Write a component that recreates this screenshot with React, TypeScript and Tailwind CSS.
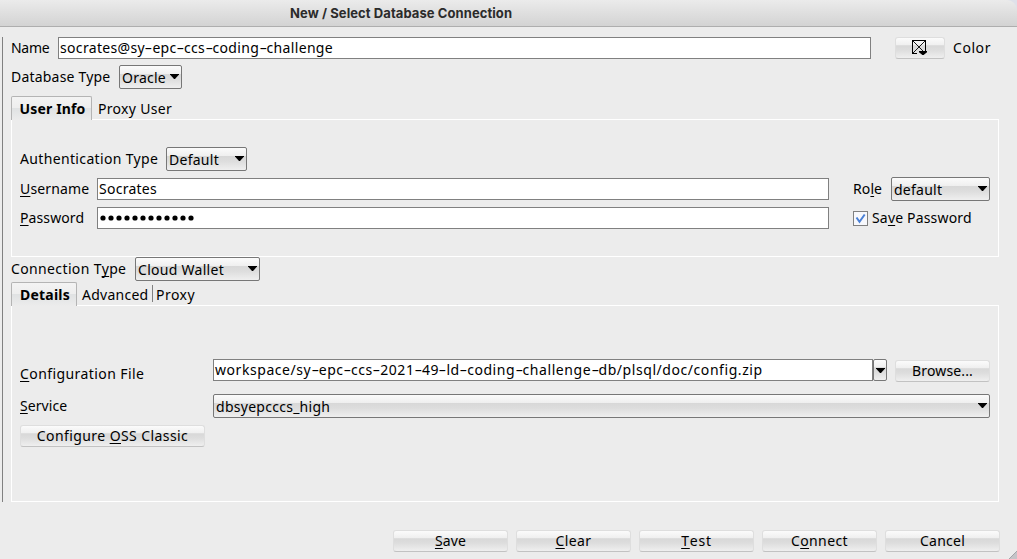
import type { ReactNode } from 'react';
import clsx from 'clsx';

const GLOSS = 'bg-[linear-gradient(#fbfbfb_0%,#efefef_36%,#d8d8d8_38%,#dddddd_60%,#efefef_100%)]';

function Caret({ className }: { className?: string }) {
  return (
    <svg width="9" height="5" viewBox="0 0 9 5" className={clsx('shrink-0', className)}>
      <path d="M0 0h9v.6L5 5H4L0 .6z" fill="#000" />
    </svg>
  );
}

function Key({ children }: { children: ReactNode }) {
  return (
    <u className="decoration-1 underline-offset-[2px] [text-decoration-skip-ink:none]">{children}</u>
  );
}

function Hyphenated({ text }: { text: string }) {
  return (
    <>
      {text.split(/(-)/).map((part, i) =>
        part === '-' ? (
          <span key={i} className="inline-block w-[7.4px] text-center tracking-normal">
            <span className="inline-block scale-x-[1.7]">-</span>
          </span>
        ) : (
          part
        ),
      )}
    </>
  );
}

function Field({ children, className }: { children?: ReactNode; className?: string }) {
  return (
    <div className={clsx('flex h-[22px] items-center border border-[#808080] bg-white pl-px', className)}>
      {children}
    </div>
  );
}

function Select({ children, className }: { children: ReactNode; className?: string }) {
  return (
    <button
      type="button"
      className={clsx(
        'flex h-6 items-center justify-between rounded-[2px] border border-[#777777] pr-[2px] pl-[2px]',
        GLOSS,
        className,
      )}
    >
      <span className="relative top-px">{children}</span>
      <Caret className="mb-px" />
    </button>
  );
}

function Button({ children, className }: { children: ReactNode; className?: string }) {
  return (
    <button
      type="button"
      className={clsx(
        'flex h-[22px] items-center justify-center rounded-[3px] border border-[#dedede] border-b-[#c2c2c2]',
        GLOSS,
        className,
      )}
    >
      {children}
    </button>
  );
}

function ActiveTab({ children, className }: { children: ReactNode; className?: string }) {
  return (
    <div
      className={clsx(
        'flex h-6 items-center justify-center rounded-t-[2px] border border-b-0 border-[#b4b4b4] bg-[linear-gradient(#f3f3f3_0%,#eeeeee_46%,#e0e2e3_50%,#ececec_100%)] pt-px pl-[2px] font-bold',
        className,
      )}
    >
      {children}
    </div>
  );
}

export default function App() {
  return (
    <div className="relative flex h-[559px] w-[1017px] flex-col overflow-hidden bg-[#ececec] font-['Noto_Sans',sans-serif] text-[14px] leading-5 whitespace-nowrap text-black">
      <header className="h-[27px] shrink-0 bg-[#dfe1ea]">
        <div className="h-full rounded-tr-[10px] border-b border-[#aeaeae] bg-linear-to-b from-[#ebebeb] to-[#d3d3d3] pt-[3px] pl-[290px] font-['Inter',sans-serif] text-[13px] font-bold tracking-[0.08px] text-[#2b2b2b]">
          New / Select Database Connection
        </div>
      </header>

      <main className="mt-[10px] ml-[2px] flex h-[465px] shrink-0 flex-col border-l border-[#808080] pl-2">
        <div className="flex h-[22px] items-center">
          <label className="w-[47px] tracking-[-0.3px]">Name</label>
          <Field className="w-[813px] tracking-[0.33px]">
            <span>
              <Hyphenated text="socrates@sy-epc-ccs-coding-challenge" />
            </span>
          </Field>
          <Button className="ml-6 w-[50px]">
            <svg width="16" height="16" viewBox="0 0 16 16">
              <path d="M5 13.5H.5V.5h13V11" fill="none" stroke="#000" shapeRendering="crispEdges" />
              <path d="M1 1l11 11M13 1L1 13" fill="none" stroke="#000" strokeWidth="0.9" />
              <path d="M7 11h8v1.2L11.6 15h-1.2L7 12.2z" fill="#000" />
            </svg>
          </Button>
          <span className="ml-2 tracking-[0.56px]">Color</span>
        </div>

        <div className="mt-[6px] flex h-6 items-center">
          <label className="w-[108px] tracking-[0.2px]">Database Type</label>
          <Select className="w-[63px] tracking-[0.25px]">Oracle</Select>
        </div>

        <div className="mt-[7px] flex h-[23px] items-start">
          <ActiveTab className="relative z-10 w-[81px] tracking-[0.16px]">User Info</ActiveTab>
          <div className="pt-[3px] pl-[6px] tracking-[0.3px]">Proxy User</div>
        </div>
        <section className="flex h-[138px] w-[988px] flex-col border border-white pt-[27px] pl-2">
          <div className="flex h-6 items-center">
            <label className="w-[146px] tracking-[0.35px]">Authentication Type</label>
            <Select className="w-[81px] tracking-[0.27px]">Default</Select>
          </div>
          <div className="mt-[6px] flex h-6 items-center">
            <label className="w-[77px] tracking-[0.13px]"><Key>U</Key>sername</label>
            <Field className="w-[732px] tracking-[0.26px]">Socrates</Field>
            <label className="ml-6 w-[38px] tracking-[0.1px]">Ro<Key>l</Key>e</label>
            <Select className="w-[99px] tracking-[0.25px]">default</Select>
          </div>
          <div className="mt-[6px] flex h-[22px] items-center">
            <label className="w-[77px] tracking-[0.1px]"><Key>P</Key>assword</label>
            <Field className="w-[732px]">
              <svg width="98" height="6" viewBox="0 0 98 6">
                {Array.from({ length: 12 }, (_, i) => (
                  <circle key={i} cx={4 + i * 8} cy="3" r="2.6" fill="#000" />
                ))}
              </svg>
            </Field>
            <span className="ml-6 flex size-[15px] items-center justify-center border border-[#808080] bg-[#f7f8fc]">
              <svg width="11" height="11" viewBox="0 0 11 11">
                <path d="M1.5 4.5l3 4.3L9.7 1.5" fill="none" stroke="#4a80d6" strokeWidth="2" />
              </svg>
            </span>
            <label className="ml-1 tracking-[0.17px]">Sa<Key>v</Key>e Password</label>
          </div>
        </section>

        <div className="flex h-6 items-center">
          <label className="w-[124px] tracking-[0.37px]">Connection T<Key>y</Key>pe</label>
          <Select className="w-[125px] tracking-[0.28px]">Cloud Wallet</Select>
        </div>

        <div className="mt-px flex h-[23px] items-start">
          <ActiveTab className="relative z-10 w-[66px] tracking-[0.22px]">Details</ActiveTab>
          <div className="w-[75px] pt-[3px] pl-[5px] tracking-[0.25px]">Advanced</div>
          <div className="mt-[3px] h-[17px] border-l border-[#808080]" />
          <div className="pt-[3px] pl-[3px] tracking-[0.46px]">Proxy</div>
        </div>
        <section className="flex h-[197px] w-[988px] flex-col border border-white pt-[53px] pl-2">
          <div className="flex h-[23px] items-start">
            <label className="w-[193px] pt-[5px] tracking-[0.42px]"><Key>C</Key>onfiguration File</label>
            <Field className="w-[660px] tracking-[0.56px]">
              <span>
                <Hyphenated text="workspace/sy-epc-ccs-2021-49-ld-coding-challenge-db/plsql/doc/config.zip" />
              </span>
            </Field>
            <button
              type="button"
              className={clsx('flex h-[22px] w-[14px] items-center justify-center rounded-[2px] border border-[#777777]', GLOSS)}
            >
              <Caret />
            </button>
            <Button className="mt-px ml-2 w-[95px] tracking-[0.15px]">Browse...</Button>
          </div>
          <div className="mt-3 flex h-6 items-center">
            <label className="w-[193px] tracking-[0.06px]"><Key>S</Key>ervice</label>
            <Select className="w-[777px] tracking-[0.27px]">dbsyepcccs_high</Select>
          </div>
          <Button className="mt-[7px] w-[185px] tracking-[0.42px]">
            <span>Configure <Key>O</Key>SS Classic</span>
          </Button>
        </section>
      </main>

      <footer className="mt-7 ml-[393px] flex gap-2">
        <Button className="w-[115px] tracking-[0.15px]"><Key>S</Key>ave</Button>
        <Button className="w-[115px] tracking-[0.4px]"><Key>C</Key>lear</Button>
        <Button className="w-[115px] tracking-[0.8px]"><Key>T</Key>est</Button>
        <Button className="w-[115px] tracking-[0.4px]">C<Key>o</Key>nnect</Button>
        <Button className="w-[115px] tracking-[0.25px]">Cancel</Button>
      </footer>

      <svg width="8" height="8" viewBox="0 0 8 8" className="absolute right-0 bottom-0">
        <path d="M8 0v8H0z" fill="#c4c4c8" />
        <path d="M0 8L8 0" stroke="#a4a4a8" />
      </svg>
    </div>
  );
}
